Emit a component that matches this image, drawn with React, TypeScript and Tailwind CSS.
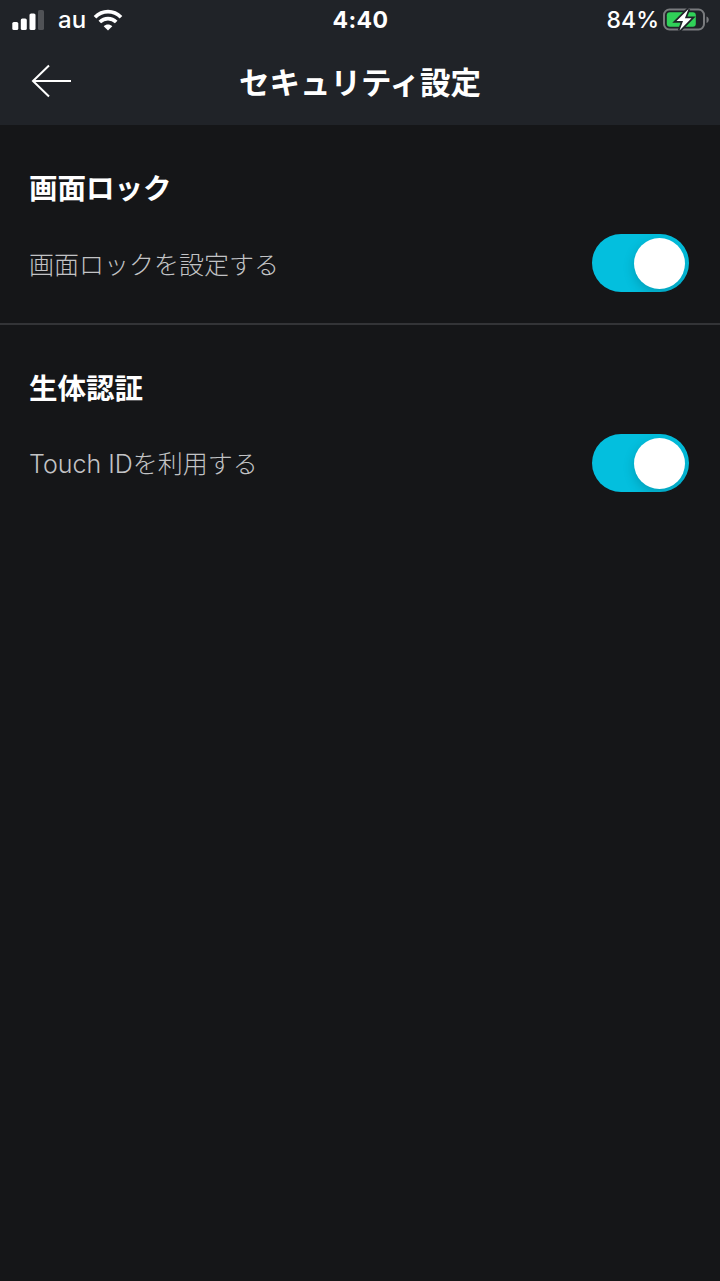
import React, { useState } from 'react';

function StatusBar() {
  return (
    <div className="grid grid-cols-3 items-center h-10 pl-3 pr-[11px] font-['Inter',sans-serif] leading-none">
      <div className="flex items-center">
        <svg width="32" height="20" viewBox="0 0 32 20" fill="#fff">
          <rect x="0.3" y="12" width="6" height="8" rx="1.6" />
          <rect x="8.8" y="8.4" width="6" height="11.6" rx="1.6" />
          <rect x="17.5" y="3.4" width="6" height="16.6" rx="1.6" />
          <rect x="26" y="0" width="6" height="20" rx="1.6" fill="#505256" />
        </svg>
        <span className="ml-3.5 w-[35px] text-[24px] font-medium">au</span>
        <svg width="30" height="22" viewBox="0 0 30 22" fill="none" stroke="#fff" strokeWidth="3.7">
          <path d="M2 8.2C9.4.7 20.6.7 28 8.2" />
          <path d="M6.8 13C11.5 8.5 18.5 8.5 23.2 13" />
          <path d="M15 21.5l-4.3-4.3c2.4-2.2 6.2-2.2 8.6 0z" fill="#fff" stroke="none" />
        </svg>
      </div>
      <div className="text-center text-[23px] font-bold tracking-[0.4px]">4:40</div>
      <div className="flex items-center justify-end">
        <span className="text-[23px] font-medium mr-1">84%</span>
        <svg width="46" height="24" viewBox="0 0 46 24">
          <rect x="1" y="1.5" width="40" height="20" rx="5.5" fill="none" stroke="#797b7e" strokeWidth="2" />
          <path d="M43.5 8.5c3 1 3 5.500 0 6.500z" fill="#797b7e" />
          <rect x="3.800" y="4.300" width="29" height="14.500" rx="3" fill="#30d158" />
          <path d="M25.500 1L13.500 13h6.500l-3.500 9.500L28.500 10.200h-6.600z" fill="#fff" stroke="#202328" strokeWidth="3.500" paintOrder="stroke" />
        </svg>
      </div>
    </div>
  );
}

function Toggle({ label }: { label: string }) {
  const [on, setOn] = useState(true);
  return (
    <button
      role="switch"
      aria-checked={on}
      aria-label={label}
      onClick={() => setOn(!on)}
      className={`flex items-center w-[97px] h-[58px] px-1 rounded-full overflow-hidden ${on ? 'justify-end bg-[#03bfde]' : 'justify-start bg-[#3a3c40]'}`}
    >
      <span className="size-[51px] rounded-full bg-white shadow-[0_4px_12px_rgba(0,0,0,0.18)]" />
    </button>
  );
}

function Section({ title, label, children }: { title: string; label: string; children: React.ReactNode }) {
  return (
    <section className="h-[200px] pl-[29px] pr-[31px] pt-10 border-b-2 border-[#333437] last:border-0">
      <h2 className="h-11 text-[28.5px] leading-[44px] font-bold">{title}</h2>
      <div className="flex items-center justify-between mt-[25px]">
        <p className="text-[25px] leading-[38px] font-light text-[#c2c3c5]">{children}</p>
        <Toggle label={label} />
      </div>
    </section>
  );
}

export default function App() {
  return (
    <div className="min-h-screen bg-[#151618] text-white font-['Noto_Sans_CJK_JP',sans-serif]">
      <header className="h-[125px] bg-[#202328]">
        <StatusBar />
        <div className="grid grid-cols-[80px_1fr_80px] items-center h-[82px]">
          <button aria-label="戻る" className="ml-[30px]">
            <svg width="42" height="34" viewBox="0 0 42 34" fill="none" stroke="#fff" strokeWidth="2">
              <path d="M41 17H3M19 1.500L3 17l16 15.500" />
            </svg>
          </button>
          <h1 className="text-center text-[30.500px] leading-[44px] font-bold">セキュリティ設定</h1>
        </div>
      </header>
      <main>
        <Section title="画面ロック" label="画面ロックを設定する">画面ロックを設定する</Section>
        <Section title="生体認証" label="Touch IDを利用する">
          <span className="font-['Inter',sans-serif]">Touch ID</span>を利用する
        </Section>
      </main>
    </div>
  );
}
